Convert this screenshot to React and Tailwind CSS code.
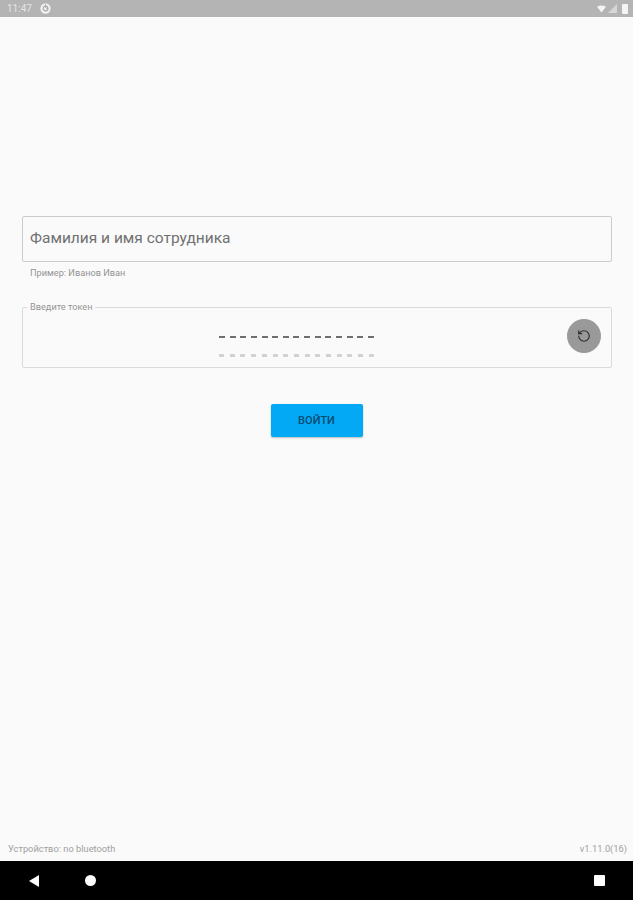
import { RotateCcw } from 'lucide-react';

const cells = Array.from({ length: 15 });

function StatusBar() {
  return (
    <div className="h-[17px] bg-[#b4b4b4] flex items-center justify-between pl-[7px] pr-[5px] shrink-0">
      <div className="flex items-center gap-[8px]">
        <span className="text-[10px] leading-none text-[#e4e4e4]">11:47</span>
        <svg className="w-[11px] h-[11px]" viewBox="0 0 12 12">
          <circle cx="6" cy="6" r="5.6" fill="#f0f0f0" />
          <circle cx="6" cy="6" r="2.6" fill="none" stroke="#a8a8a8" strokeWidth="1.2" />
          <path d="M6 1v4l3 2" stroke="#a8a8a8" strokeWidth="0.9" fill="none" />
        </svg>
      </div>
      <div className="flex items-center gap-[2px]">
        {/* wifi */}
        <svg className="w-[9px] h-[8px]" viewBox="0 0 10 8">
          <path d="M0 1.5C3 -0.5 7 -0.5 10 1.5L5 8z" fill="#f4f4f4" />
        </svg>
        {/* signal */}
        <svg className="w-[9px] h-[9px]" viewBox="0 0 9 9">
          <path d="M9 0V9H0z" fill="#d6d6d6" />
        </svg>
        {/* battery */}
        <div className="w-[6px] h-[10px] ml-[3px] bg-[#f4f4f4] rounded-[1px]" />
      </div>
    </div>
  );
}

function NavBar() {
  return (
    <div className="h-[39px] bg-black shrink-0 flex items-center pl-[29px] pr-[28px]">
      <svg className="w-[10px] h-[12px]" viewBox="0 0 10 12">
        <path d="M0 6L10 0V12z" fill="#ffffff" />
      </svg>
      <div className="w-[11px] h-[11px] ml-[46px] rounded-full bg-white" />
      <div className="w-[11px] h-[11px] ml-auto rounded-[1px] bg-white" />
    </div>
  );
}

export default function App() {
  return (
    <div className="h-[900px] flex flex-col bg-[#fafafa] font-['Roboto',sans-serif]">
      <StatusBar />

      <div className="flex-1 flex flex-col px-[22px] pt-[199px]">
        {/* Name input */}
        <div className="h-[46px] w-[590px] border border-[#cccccc] rounded-[2px] flex items-center px-[7px]">
          <span className="text-[15.5px] text-[#707070]">Фамилия и имя сотрудника</span>
        </div>
        <p className="mt-[5px] ml-[8px] text-[9.2px] leading-[12px] text-[#949494]">Пример: Иванов Иван</p>

        {/* Token input */}
        <fieldset className="mt-[22px] h-[67px] w-[590px] border border-[#dadada] rounded-[2px] pl-[6px] pr-[10px]">
          <legend className="-ml-[2px] px-[3px] text-[9.2px] leading-[12px] text-[#949494]">Введите токен</legend>
          <div className="h-[46px] flex items-center">
            <div className="flex-1 flex justify-center pr-[3px] mt-[20px]">
              <div className="flex flex-col gap-[16px] w-[155px]">
                <div className="flex justify-between">
                  {cells.map((_, i) => (
                    <div key={i} className="w-[6px] h-[2px] bg-[#6e6e6e]" />
                  ))}
                </div>
                <div className="flex justify-between">
                  {cells.map((_, i) => (
                    <div key={i} className="w-[5px] h-[3px] bg-[#d2d2d2]" />
                  ))}
                </div>
              </div>
            </div>
            <div className="w-[34px] h-[34px] rounded-full bg-[#999999] flex items-center justify-center">
              <RotateCcw className="w-[14px] h-[14px] text-[#2e2e2e]" strokeWidth={2} />
            </div>
          </div>
        </fieldset>

        <button className="mt-[36px] pt-[1px] self-center w-[92px] h-[33px] bg-[#03a9f4] rounded-[2px] shadow-[0_1px_2px_rgba(0,0,0,0.25)] text-[11px] font-medium text-[#064a70]">
          ВОЙТИ
        </button>

        <div className="mt-auto -mx-[14px] pb-[6px] flex justify-between text-[9.3px] leading-[12px] text-[#a0a0a0]">
          <span>Устройство: no bluetooth</span>
          <span className="-mr-[2px]">v1.11.0(16)</span>
        </div>
      </div>

      <NavBar />
    </div>
  );
}
